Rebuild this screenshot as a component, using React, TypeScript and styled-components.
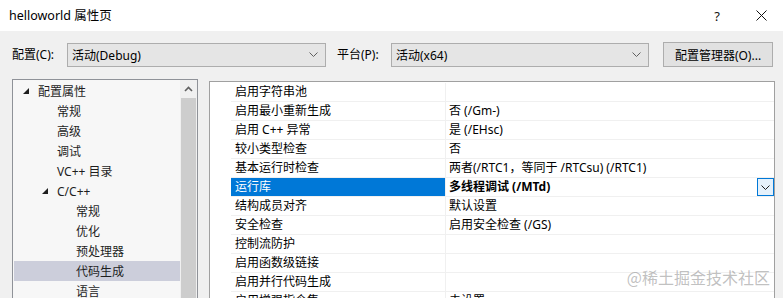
import React from "react";
import styled, { createGlobalStyle } from "styled-components";

const GlobalStyle = createGlobalStyle`
  html, body {
    margin: 0;
    padding: 0;
    overflow: hidden;
    background: #f0f0f0;
  }
`;

const Window = styled.div`
  position: relative;
  width: 783px;
  height: 298px;
  overflow: hidden;
  display: flex;
  flex-direction: column;
  background: #f0f0f0;
  color: #000;
  font-family: "Segoe UI", "Noto Sans", "Noto Sans CJK SC", sans-serif;
  font-size: 12px;
`;

const TitleBar = styled.header`
  flex: none;
  height: 31px;
  display: flex;
  align-items: center;
  background: #fff;
  padding-left: 9px;
`;

const TitleText = styled.span`
  flex: 1;
  font-size: 12.5px;
  line-height: 31px;
`;

const TitleButton = styled.div`
  width: 44px;
  height: 31px;
  display: flex;
  align-items: center;
  justify-content: center;
  font-size: 13px;
  color: #111;
`;

const Toolbar = styled.div`
  flex: none;
  display: flex;
  align-items: center;
  height: 25px;
  margin-top: 11px;
  padding-left: 12px;
`;

const Label = styled.span<{ $w: number; $ml?: number }>`
  width: ${(p) => p.$w}px;
  margin-left: ${(p) => p.$ml ?? 0}px;
  white-space: nowrap;
  line-height: 25px;
`;

const Select = styled.div<{ $w: number }>`
  box-sizing: border-box;
  width: ${(p) => p.$w}px;
  height: 24px;
  display: flex;
  align-items: center;
  padding: 0 7px 0 4px;
  background: #e5e5e5;
  border: 1px solid #adadad;
  span {
    flex: 1;
    white-space: nowrap;
  }
`;

const ToolButton = styled.div`
  box-sizing: border-box;
  width: 110px;
  height: 25px;
  margin-left: 14px;
  display: flex;
  align-items: center;
  justify-content: center;
  background: #e1e1e1;
  border: 1px solid #adadad;
  white-space: nowrap;
`;

const Body = styled.div`
  flex: 1;
  display: flex;
  align-items: flex-start;
  gap: 11px;
  margin-top: 12px;
  padding-left: 12px;
  min-height: 0;
`;

const Tree = styled.div`
  box-sizing: border-box;
  flex: none;
  width: 186px;
  height: 240px;
  display: flex;
  background: #f7f7f7;
  border: 1px solid #8f9298;
`;

const TreeList = styled.ul`
  flex: 1;
  margin: 0;
  padding: 1px 0 0 1px;
  list-style: none;
`;

const TreeRow = styled.li<{ $level: number; $selected?: boolean }>`
  height: 20px;
  display: flex;
  align-items: center;
  padding-left: ${(p) => 9 + p.$level * 19}px;
  background: ${(p) => (p.$selected ? "#cccedb" : "transparent")};
  color: #1e1e1e;
  white-space: nowrap;
`;

const Twisty = styled.span`
  width: 15px;
  flex: none;
  display: flex;
  align-items: center;
`;

const Scrollbar = styled.div`
  width: 17px;
  flex: none;
  display: flex;
  flex-direction: column;
  background: #f0f0f0;
`;

const ScrollArrow = styled.div`
  height: 17px;
  display: flex;
  align-items: center;
  justify-content: center;
`;

const ScrollThumb = styled.div`
  flex: 1;
  margin: 1px 1px 0 1px;
  background: #cdcdcd;
`;

const Grid = styled.div`
  box-sizing: border-box;
  flex: none;
  width: 566px;
  height: 240px;
  margin-top: 2px;
  padding-top: 1px;
  background: #fff;
  border: 1px solid #a0a0a0;
`;

const GridRow = styled.div`
  display: flex;
  height: 19px;
`;

const Gutter = styled.div`
  width: 21px;
  flex: none;
`;

const NameCell = styled.div<{ $selected?: boolean }>`
  box-sizing: border-box;
  width: 215px;
  flex: none;
  height: 19px;
  padding-left: 4px;
  line-height: 18px;
  white-space: nowrap;
  border-bottom: 1px solid #f0f0f0;
  border-right: 1px solid #f0f0f0;
  background: ${(p) => (p.$selected ? "#0078d7" : "transparent")};
  background-clip: content-box;
  color: ${(p) => (p.$selected ? "#fff" : "#000")};
  ${(p) => p.$selected && "padding-left: 0; text-indent: 4px;"}
`;

const ValueCell = styled.div<{ $bold?: boolean }>`
  box-sizing: border-box;
  flex: 1;
  height: 19px;
  display: flex;
  padding-left: 3px;
  line-height: 18px;
  white-space: nowrap;
  border-bottom: 1px solid #f0f0f0;
  font-weight: ${(p) => (p.$bold ? 700 : 400)};
  span {
    flex: 1;
  }
`;

const DropButton = styled.div`
  box-sizing: border-box;
  width: 17px;
  height: 18px;
  display: flex;
  align-items: center;
  justify-content: center;
  background: #e5f1fb;
  border: 1px solid #0078d7;
`;

const Watermark = styled.div`
  position: absolute;
  right: 13px;
  bottom: 12px;
  font-family: "Noto Sans CJK SC", sans-serif;
  font-size: 16px;
  line-height: 18px;
  color: rgba(140, 140, 140, 0.55);
  pointer-events: none;
`;

const Chevron = ({ color = "#606060", w = 9 }: { color?: string; w?: number }) => (
  <svg width={w} height={5} viewBox="0 0 9 5">
    <path d="M0.5 0.5 L4.5 4.5 L8.5 0.5" fill="none" stroke={color} strokeWidth="1" />
  </svg>
);

const Expander = () => (
  <svg width="6" height="6" viewBox="0 0 6 6">
    <polygon points="6,0 6,6 0,6" fill="#1e1e1e" />
  </svg>
);

const treeItems = [
  { label: "配置属性", level: 0, open: true },
  { label: "常规", level: 1 },
  { label: "高级", level: 1 },
  { label: "调试", level: 1 },
  { label: "VC++ 目录", level: 1 },
  { label: "C/C++", level: 1, open: true },
  { label: "常规", level: 2 },
  { label: "优化", level: 2 },
  { label: "预处理器", level: 2 },
  { label: "代码生成", level: 2, selected: true },
  { label: "语言", level: 2 },
];

const props = [
  { name: "启用字符串池", value: "" },
  { name: "启用最小重新生成", value: "否 (/Gm-)" },
  { name: "启用 C++ 异常", value: "是 (/EHsc)" },
  { name: "较小类型检查", value: "否" },
  { name: "基本运行时检查", value: "两者(/RTC1，等同于 /RTCsu) (/RTC1)" },
  { name: "运行库", value: "多线程调试 (/MTd)", selected: true },
  { name: "结构成员对齐", value: "默认设置" },
  { name: "安全检查", value: "启用安全检查 (/GS)" },
  { name: "控制流防护", value: "" },
  { name: "启用函数级链接", value: "" },
  { name: "启用并行代码生成", value: "" },
  { name: "启用增强指令集", value: "未设置" },
];

export default function App() {
  return (
    <>
      <GlobalStyle />
      <Window>
        <TitleBar>
          <TitleText>helloworld 属性页</TitleText>
          <TitleButton>?</TitleButton>
          <TitleButton>
            <svg width="11" height="11" viewBox="0 0 11 11">
              <path d="M0.5 0.5 L10.5 10.5 M10.5 0.5 L0.5 10.5" stroke="#111" strokeWidth="1" />
            </svg>
          </TitleButton>
        </TitleBar>

        <Toolbar>
          <Label $w={55}>配置(C):</Label>
          <Select $w={259}>
            <span>活动(Debug)</span>
            <Chevron />
          </Select>
          <Label $w={54} $ml={11}>平台(P):</Label>
          <Select $w={258}>
            <span>活动(x64)</span>
            <Chevron />
          </Select>
          <ToolButton>配置管理器(O)...</ToolButton>
        </Toolbar>

        <Body>
          <Tree>
            <TreeList>
              {treeItems.map((item, i) => (
                <TreeRow key={i} $level={item.level} $selected={item.selected}>
                  <Twisty>{item.open && <Expander />}</Twisty>
                  {item.label}
                </TreeRow>
              ))}
            </TreeList>
            <Scrollbar>
              <ScrollArrow>
                <svg width="9" height="6" viewBox="0 0 9 6">
                  <path d="M1 5 L4.5 1.5 L8 5" fill="none" stroke="#606060" strokeWidth="1.6" />
                </svg>
              </ScrollArrow>
              <ScrollThumb />
            </Scrollbar>
          </Tree>

          <Grid>
            {props.map((p, i) => (
              <GridRow key={i}>
                <Gutter />
                <NameCell $selected={p.selected}>{p.name}</NameCell>
                <ValueCell $bold={p.selected}>
                  <span>{p.value}</span>
                  {p.selected && (
                    <DropButton>
                      <Chevron color="#1e1e1e" />
                    </DropButton>
                  )}
                </ValueCell>
              </GridRow>
            ))}
          </Grid>
        </Body>

        <Watermark>@稀土掘金技术社区</Watermark>
      </Window>
    </>
  );
}
